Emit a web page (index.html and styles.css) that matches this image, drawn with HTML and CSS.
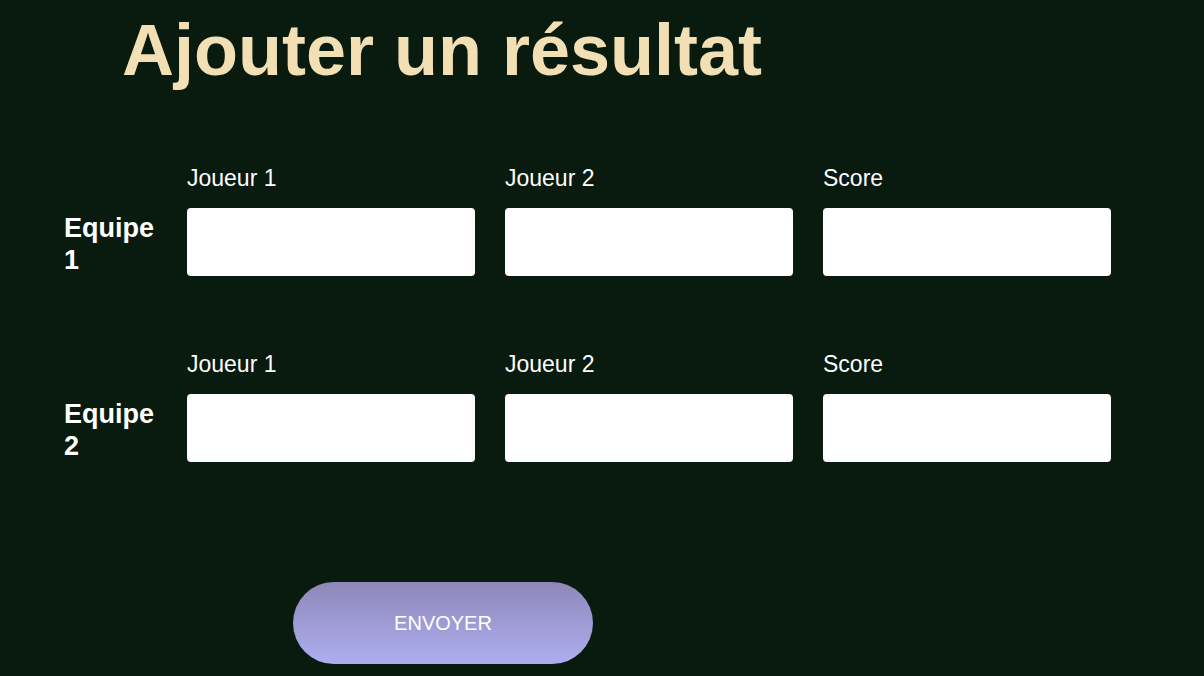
FILE: index.html
```html
<!DOCTYPE html>
<html lang="fr">
<head>
<meta charset="utf-8">
<title>Ajouter un résultat</title>
<link rel="stylesheet" href="styles.css">
</head>
<body>
<main class="page">
  <h1 class="title">Ajouter un résultat</h1>
  <form class="form">
    <div class="team-row">
      <div class="team-label">Equipe 1</div>
      <label class="field"><span class="field-label">Joueur 1</span><input class="field-input" type="text"></label>
      <label class="field"><span class="field-label">Joueur 2</span><input class="field-input" type="text"></label>
      <label class="field"><span class="field-label">Score</span><input class="field-input" type="text"></label>
    </div>
    <div class="team-row">
      <div class="team-label">Equipe 2</div>
      <label class="field"><span class="field-label">Joueur 1</span><input class="field-input" type="text"></label>
      <label class="field"><span class="field-label">Joueur 2</span><input class="field-input" type="text"></label>
      <label class="field"><span class="field-label">Score</span><input class="field-input" type="text"></label>
    </div>
    <div class="actions">
      <button class="submit" type="button">ENVOYER</button>
    </div>
  </form>
</main>
</body>
</html>
```
FILE: styles.css
```css
html, body {
  margin: 0;
  padding: 0;
  background: #081b0e;
  font-family: "Liberation Sans", Arial, sans-serif;
  color: #ffffff;
}
.page {
  padding: 0 0 0 64px;
  height: 676px;
  overflow: hidden;
  box-sizing: border-box;
}
.title {
  margin: 0;
  padding: 9px 0 0 58px;
  font-size: 72px;
  line-height: 82px;
  font-weight: bold;
  color: #f2dfb4;
}
.form {
  display: flex;
  flex-direction: column;
  gap: 77px;
  padding-top: 76px;
}
.team-row {
  display: flex;
  align-items: flex-end;
}
.team-label {
  width: 100px;
  margin-right: 23px;
  font-size: 27px;
  line-height: 32px;
  font-weight: bold;
}
.field {
  display: flex;
  flex-direction: column;
  gap: 18px;
  width: 288px;
  margin-right: 30px;
}
.field-label {
  font-size: 23px;
  line-height: 23px;
}
.field-input {
  box-sizing: border-box;
  width: 288px;
  height: 68px;
  border: none;
  border-radius: 4px;
  background: #ffffff;
  margin: 0;
}
.actions {
  padding-left: 229px;
  margin-top: 43px;
}
.submit {
  width: 300px;
  height: 82px;
  border: none;
  border-radius: 41px;
  background: linear-gradient(to bottom, #8e87b8, #aeaef0);
  color: #ffffff;
  font-family: "Liberation Sans", Arial, sans-serif;
  font-size: 20px;
}
```
